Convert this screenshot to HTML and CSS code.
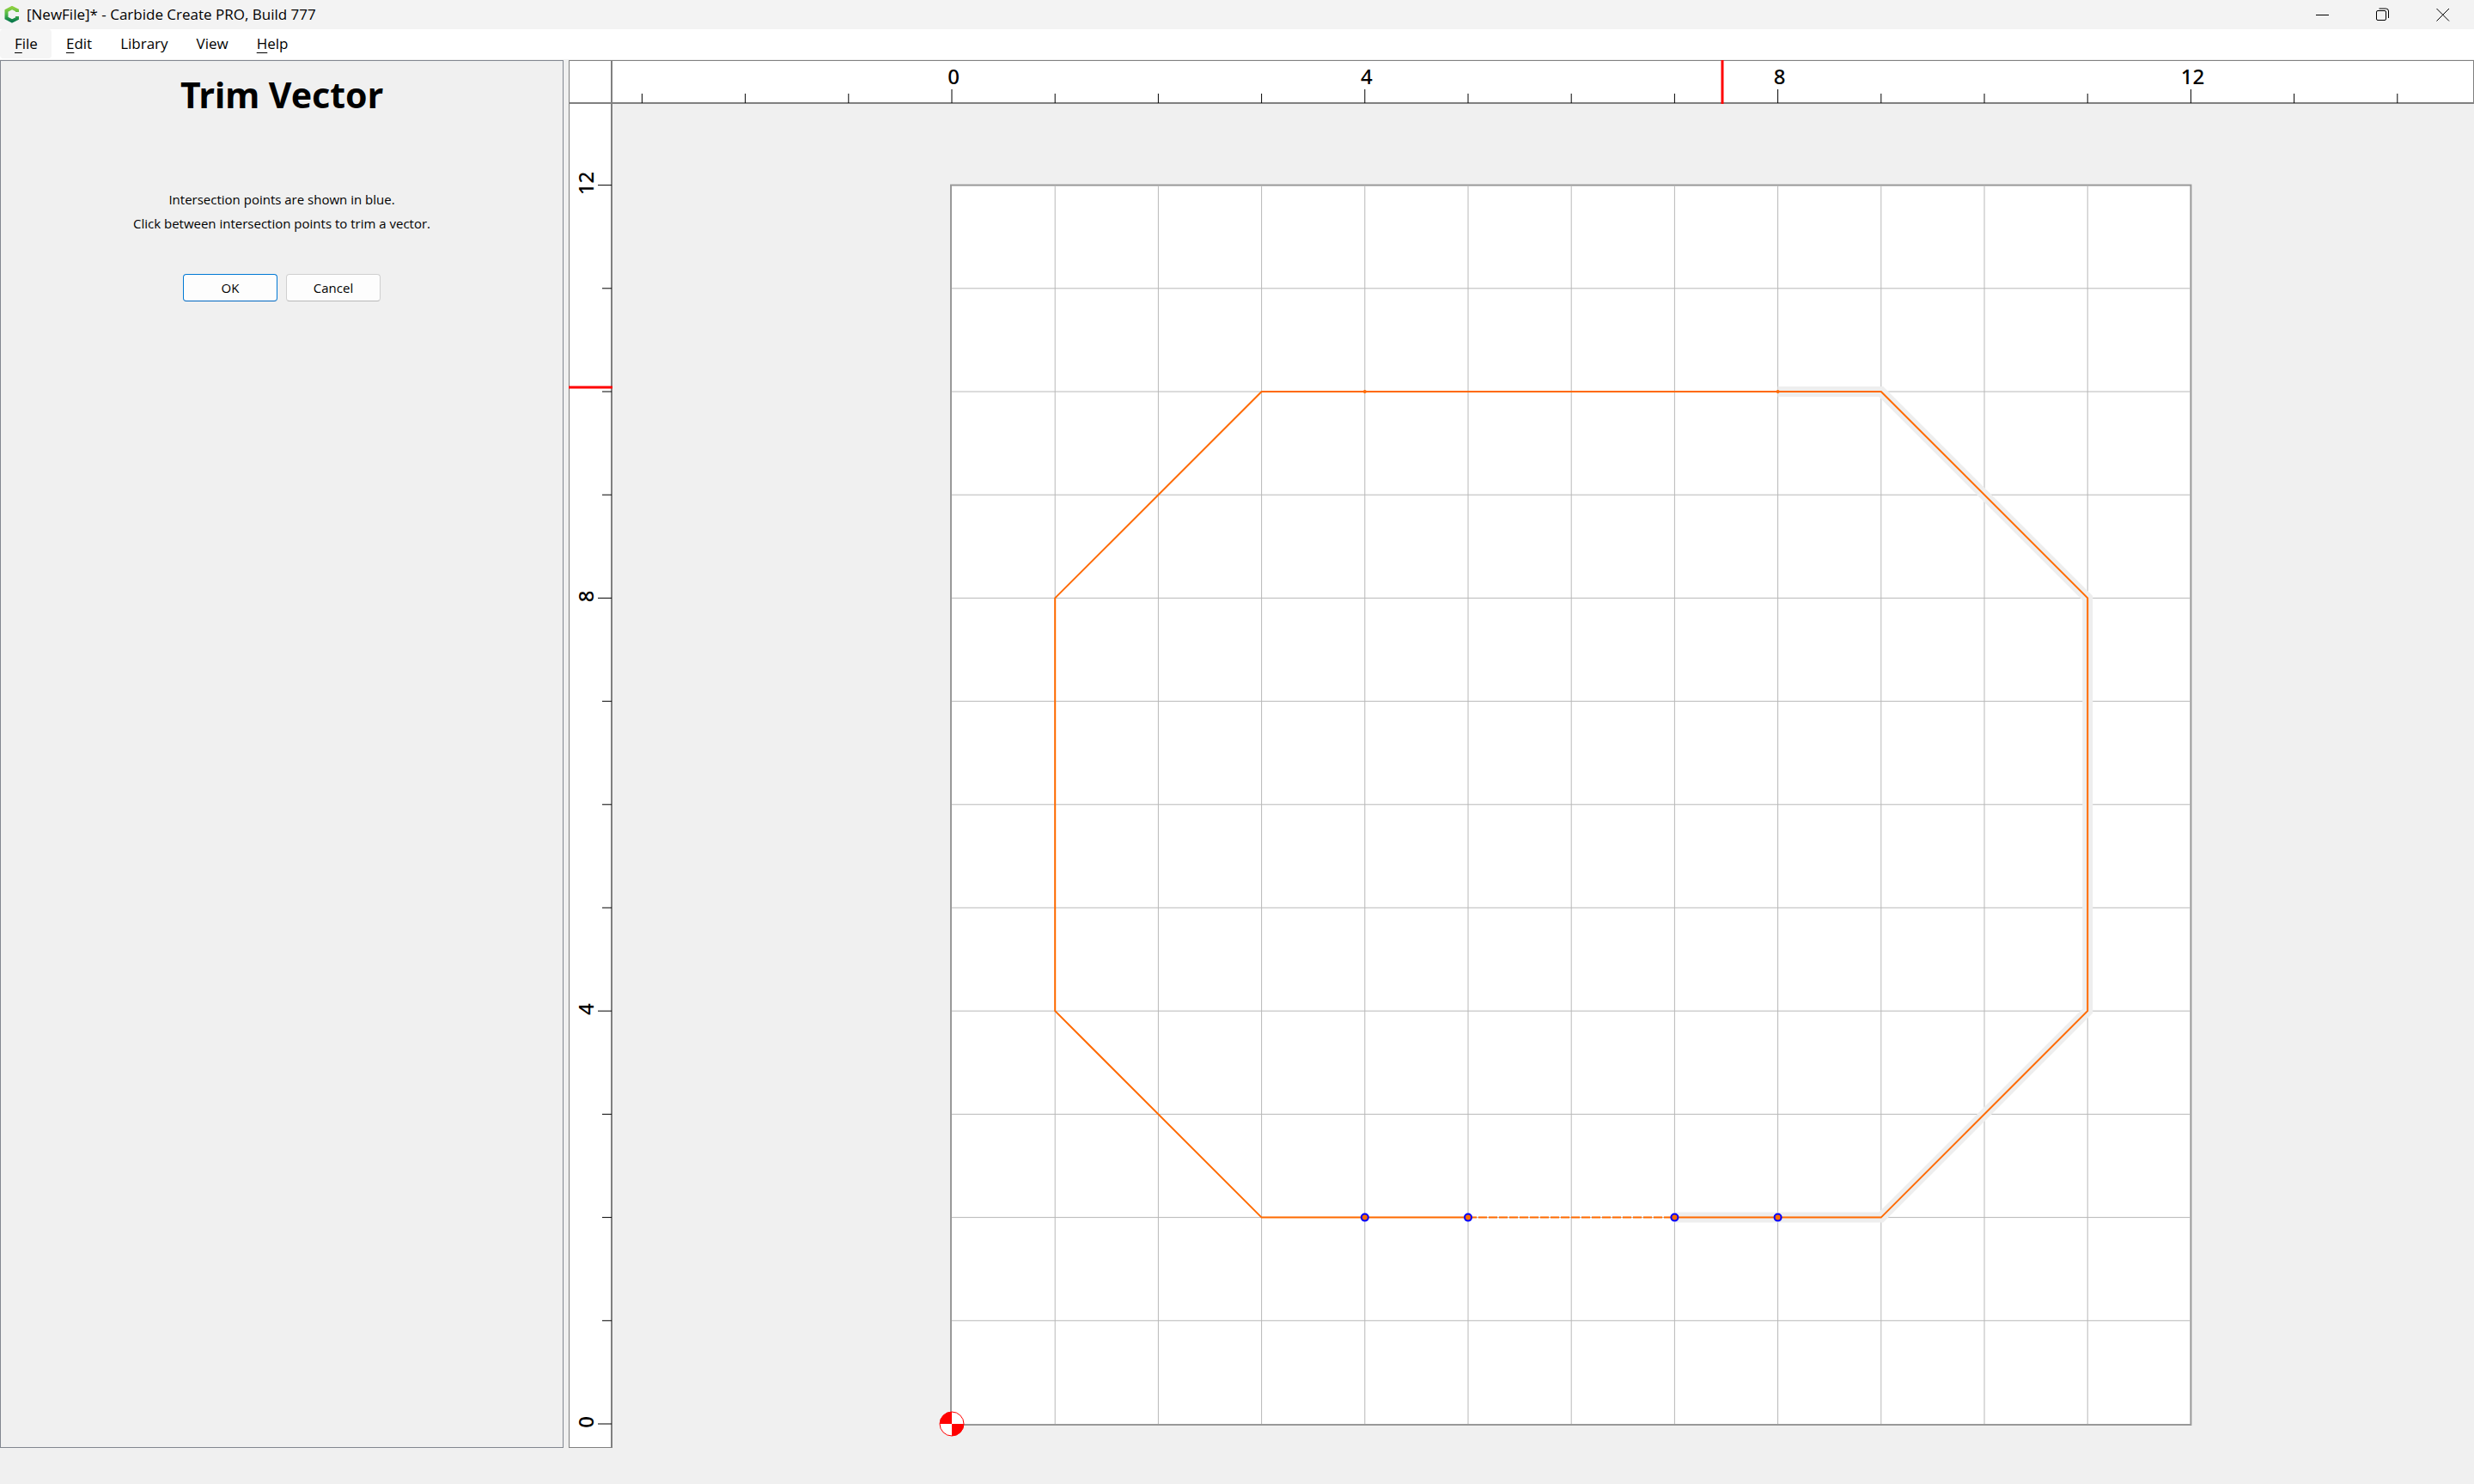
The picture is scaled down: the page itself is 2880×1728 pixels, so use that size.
FILE: index.html
```html
<!DOCTYPE html>
<html lang="en">
<head>
<meta charset="utf-8">
<title>[NewFile]* - Carbide Create PRO, Build 777</title>
<link rel="stylesheet" href="styles.css">
</head>
<body>
<header class="titlebar">
  <svg class="logo" viewBox="0 0 18 20" aria-hidden="true">
    <defs><linearGradient id="lg" x1="0" y1="0" x2="0" y2="1"><stop offset="0" stop-color="#8ccf3f"/><stop offset=".5" stop-color="#4cb648"/><stop offset="1" stop-color="#0b7a4b"/></linearGradient></defs>
    <path d="M15 7V5L9 2 2.500 5.500V14L9 17.500 15 14.500V12" fill="none" stroke="url(#lg)" stroke-width="4"/>
  </svg>
  <span class="window-name">[NewFile]* - Carbide Create PRO, Build 777</span>
  <div class="window-controls">
    <button type="button" aria-label="Minimize"><svg viewBox="0 0 16 16"><path d="M0 8.500H15"/></svg></button>
    <button type="button" aria-label="Restore"><svg viewBox="0 0 16 16"><rect x=".5" y="3.500" width="11" height="11" rx="1.500"/><path d="M3.500 1H11.500Q14.500 1 14.500 4V12"/></svg></button>
    <button type="button" aria-label="Close"><svg viewBox="0 0 16 16"><path d="M.5 1L15 15.500M15 1L.5 15.500"/></svg></button>
  </div>
</header>
<nav class="menubar">
  <button type="button" class="active"><u>F</u>ile</button>
  <button type="button"><u>E</u>dit</button>
  <button type="button">Library</button>
  <button type="button">View</button>
  <button type="button"><u>H</u>elp</button>
</nav>
<main class="workspace">
  <aside class="panel">
    <h1>Trim Vector</h1>
    <p>Intersection points are shown in blue.<br>Click between intersection points to trim a vector.</p>
    <div class="actions">
      <button type="button" class="primary">OK</button>
      <button type="button">Cancel</button>
    </div>
  </aside>
  <section class="view">
    <div class="corner"></div>
    <svg class="ruler-top" viewBox="713 71 2166 48" id="top"></svg>
    <svg class="ruler-left" viewBox="663 121 48 1564" id="left"></svg>
    <svg class="canvas" viewBox="713 121 2167 1565" id="canvas"></svg>
  </section>
</main>
<footer class="statusbar"></footer>
<script src="app.js"></script>
</body>
</html>
```
FILE: styles.css
```css
* { box-sizing: border-box; }
body {
  margin: 0;
  min-height: 100vh;
  display: flex;
  flex-direction: column;
  background: #f0f0f0;
  color: #000;
  font: 15px/28px "Open Sans", "Liberation Sans", sans-serif;
}
button { font: inherit; color: inherit; border: 0; background: none; padding: 0; }
.titlebar {
  height: 34px;
  display: flex;
  align-items: center;
  padding-right: 1px;
  background: #f3f3f3;
  font-size: 17px;
  line-height: 34px;
}
.logo { width: 18px; height: 20px; margin: 0 8px 0 5px; }
.window-controls { display: flex; margin-left: auto; }
.window-controls button { width: 70px; height: 34px; display: grid; place-items: center; }
.window-controls svg { width: 16px; height: 16px; fill: none; stroke: #000; }
.menubar {
  height: 35px;
  display: flex;
  background: #fff;
  font-size: 17px;
  line-height: 34px;
}
.menubar button { height: 34px; padding: 0 16px 0 17px; border-radius: 4px; }
.menubar .active { background: #f5f5f5; }
.menubar u { text-underline-offset: 4px; text-decoration-thickness: 1px; }
.workspace { flex: 1; display: flex; gap: 6px; padding-top: 1px; min-height: 0; }
.panel {
  flex: 0 0 656px;
  display: flex;
  flex-direction: column;
  align-items: center;
  border: 1px solid #828790;
  text-align: center;
}
.panel h1 { margin: 15px 0 84px; font: bold 41px/48px "Noto Sans", sans-serif; }
.panel p { margin: 0 0 45px; }
.actions { display: flex; gap: 10px; }
.actions button {
  width: 110px;
  height: 32px;
  line-height: 28px;
  background: #fdfdfd;
  border: 1px solid #d0d0d0;
  border-bottom-color: #b8b8b8;
  border-radius: 4px;
}
.actions .primary { border-color: #0078d4; border-bottom-color: #0067c0; }
.view {
  flex: 1;
  min-width: 0;
  display: grid;
  grid-template: 51px minmax(0, 1fr) / 51px minmax(0, 1fr);
}
.view svg { display: block; width: 100%; height: 100%; overflow: visible; min-height: 0; }
.corner, .ruler-top, .ruler-left { background: #fff; border: 1px solid #808080; }
.corner { border-width: 1px 2px 2px 1px; }
.ruler-top { border-width: 1px 1px 2px 0; }
.ruler-left { border-width: 0 2px 1px 1px; }
.statusbar { height: 42px; }
.tick { stroke: #000; }
.label { font: 500 24px "Noto Sans", sans-serif; text-anchor: middle; }
.cursor { stroke: #f00; stroke-width: 3px; }
.stock { fill: #fff; stroke: #999; stroke-width: 2px; }
.grid-line { stroke: #b8b8b8; }
.halo { fill: none; stroke: #eee; stroke-width: 12px; }
.vector { fill: none; stroke: #ff6a00; stroke-width: 2px; }
.dashed { stroke-dasharray: 10 2; }
.dot { fill: #ff6a00; }
.point { fill: #ff6a00; stroke: #00f; stroke-width: 2px; }
.origin-ring { fill: #fff; stroke: #f00; }
.origin-fill { fill: #f00; }
```
FILE: app.js
```js
const UNIT = 120.2, X0 = 1108, Y0 = 1658;
const px = n => X0 + n * UNIT;
const py = n => Y0 - n * UNIT;
const line = (x1, y1, x2, y2, cls) => `<line class="${cls}" x1="${x1}" y1="${y1}" x2="${x2}" y2="${y2}"/>`;
const path = (pts, cls) => `<polyline class="${cls}" points="${pts.map(([x, y]) => px(x) + ',' + py(y)).join(' ')}"/>`;

let top_ = '', left = '', stock = '';
for (let i = -3; i <= 14; i++) {
  const major = i % 4 === 0;
  top_ += line(px(i), major ? 104 : 109, px(i), 120, 'tick');
  if (major) top_ += `<text class="label" x="${px(i) + 2}" y="98">${i}</text>`;
}
for (let i = 0; i <= 12; i++) {
  const major = i % 4 === 0;
  left += line(major ? 696 : 701, py(i), 712, py(i), 'tick');
  if (major) left += `<text class="label" transform="translate(691 ${py(i) - 2}) rotate(-90)">${i}</text>`;
}
top_ += line(2005, 70, 2005, 121, 'cursor');
left += line(662, 451, 713, 451, 'cursor');

stock += `<rect class="stock" x="${px(0) - 1}" y="${py(12)}" width="${12 * UNIT + 1}" height="${12 * UNIT + 1}"/>`;
for (let i = 1; i < 12; i++) {
  stock += line(px(i), py(12) + 1, px(i), py(0), 'grid-line');
  stock += line(px(0), py(i), px(12) - 1, py(i), 'grid-line');
}
const right = [[8, 10], [9, 10], [11, 8], [11, 4], [9, 2], [7, 2]];
stock += path(right, 'halo');
stock += path([[5, 2], [3, 2], [1, 4], [1, 8], [3, 10], [8, 10]], 'vector');
stock += path(right, 'vector');
stock += path([[5, 2], [7, 2]], 'vector dashed');
for (const x of [4, 8]) stock += `<circle class="dot" cx="${px(x)}" cy="${py(10)}" r="2"/>`;
for (const x of [4, 5, 7, 8]) stock += `<circle class="point" cx="${px(x)}" cy="${py(2)}" r="4"/>`;
stock += `<circle class="origin-ring" cx="${X0}" cy="${Y0}" r="14"/>`;
stock += `<path class="origin-fill" d="M${X0} ${Y0}v-14a14 14 0 0 0-14 14zM${X0} ${Y0}v14a14 14 0 0 0 14-14z"/>`;

document.getElementById('top').innerHTML = top_;
document.getElementById('left').innerHTML = left;
document.getElementById('canvas').innerHTML = stock;
```
